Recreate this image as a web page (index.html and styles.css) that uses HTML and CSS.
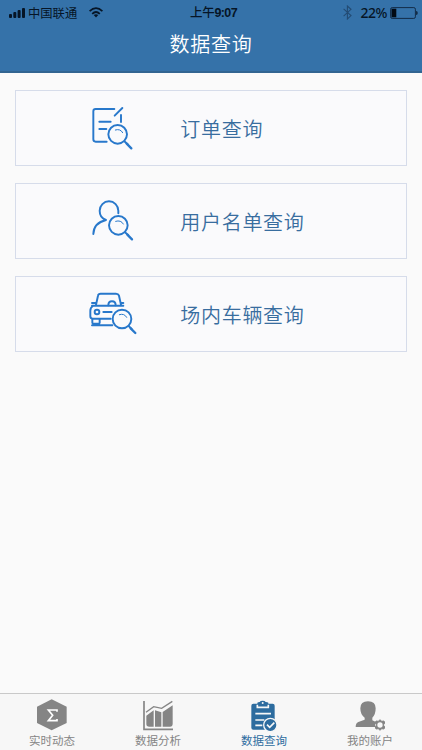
FILE: index.html
```html
<!DOCTYPE html>
<html lang="zh-CN">
<head>
<meta charset="utf-8">
<title>数据查询</title>
<link rel="stylesheet" href="styles.css">
</head>
<body>
<div class="app">
  <header class="header">
    <div class="status">
      <div class="status-left">
        <svg class="signal" width="17" height="11" viewBox="0 0 17 11"><g fill="#061526"><rect x="0" y="7" width="3" height="4" rx="1"/><rect x="4.3" y="5" width="3" height="6" rx="1"/><rect x="8.6" y="3" width="3" height="8" rx="1"/><rect x="13" y="1" width="3" height="10" rx="1"/></g></svg>
        <span class="carrier">中国联通</span>
        <svg class="wifi" width="14" height="11" viewBox="0 0 14 11"><g fill="none" stroke="#061526" stroke-width="1.7"><path d="M.6 4.2Q7-1.8 13.4 4.2"/><path d="M3.2 6.8Q7 3.2 10.8 6.8"/></g><path d="M4.7 8.1Q7 6.3 9.3 8.1L7 10.6z" fill="#061526"/></svg>
      </div>
      <div class="time">上午<span class="clock">9:07</span></div>
      <div class="status-right">
        <svg class="bluetooth" width="9" height="15" viewBox="0 0 9 15"><path d="M.6 3.8L8 10.6 4.4 14V1L8 4.3.6 11.2" fill="none" stroke="#234b73" stroke-width="1.1"/></svg>
        <span class="percent">22%</span>
        <svg class="battery" width="28" height="12" viewBox="0 0 28 12"><rect x=".6" y=".6" width="24.8" height="10.8" rx="1.6" fill="none" stroke="#122c48" stroke-width="1"/><rect x="1.5" y="1.7" width="4.8" height="8.6" fill="#020a14"/><path d="M26 4q1.8 0 1.8 2T26 8z" fill="#122c48"/></svg>
      </div>
    </div>
    <h1 class="title">数据查询</h1>
  </header>

  <main class="list">
    <a class="card">
      <svg class="card-icon" viewBox="20 68 160 150">
        <g class="line"><path d="M102 86H46q-7 0-7 7V177q0 7 7 7H79"/><path d="M57 124H91M57 146H78M103 106L126 83M122 104V125"/><circle cx="112" cy="162" r="28"/><path d="M105 149q15-5 22 8" stroke-width="3"/><path d="M132 183L142 192"/><path d="M139 190L153 204" stroke-width="7"/></g>
      </svg>
      <span class="card-label">订单查询</span>
    </a>
    <a class="card">
      <svg class="card-icon" viewBox="20 47 160 150">
        <g class="line"><path d="M39 161q1-33 38-42Q58 112 58 91a28 28 0 0 1 56 0v8"/><circle cx="114" cy="135" r="28"/><path d="M106 123q16-5 23 8" stroke-width="3"/><path d="M134 156L144 165"/><path d="M141 163L155 177" stroke-width="7"/></g>
      </svg>
      <span class="card-label">用户名单查询</span>
    </a>
    <a class="card">
      <svg class="card-icon" viewBox="20 41 160 150">
        <g class="line"><path d="M47 88L53 61q1-6 8-6H107q7 0 9 6L122 88M35 83H47M123 83H129M35 91H129M38 92q-8 4-8 14v17q0 7 7 7H91"/><path d="M84 90q0-12 11-12t11 12"/><circle cx="50" cy="110" r="7"/><path d="M69 110H94M36 131V142q0 3 4 3H54q4 0 4-3V131M35 150H96"/><circle cx="125" cy="131" r="28"/><path d="M117 118q15-5 22 8" stroke-width="3"/><path d="M145 152L154 161"/><path d="M151 159L165 173" stroke-width="7"/></g>
      </svg>
      <span class="card-label">场内车辆查询</span>
    </a>
  </main>

  <nav class="tabs">
    <a class="tab">
      <svg class="tab-icon" viewBox="105 38 102 102"><path d="M155 42L200 64V113L155 135 111 113V64z" fill="#858585"/><path d="M171 79V74H145L158 90 145 106H171V101" fill="none" stroke="#fff" stroke-width="5"/></svg>
      <span class="tab-label">实时动态</span>
    </a>
    <a class="tab">
      <svg class="tab-icon" viewBox="423 38 102 102"><g fill="#858585"><path d="M439 91L461 75V124H448q-9 0-9-8zM465 75L484 81V124H465zM488 80L518 60V115q0 9-8 9H488z"/><path d="M432 47V132H519" fill="none" stroke="#858585" stroke-width="5"/><path d="M438 81L461 64 485 69 517 48" fill="none" stroke="#858585" stroke-width="4"/></g></svg>
      <span class="tab-label">数据分析</span>
    </a>
    <a class="tab active">
      <svg class="tab-icon" viewBox="108 38 102 102"><path d="M127 55H139V52q2-2 7-2 2-4 9-4t9 4q6 0 8 2v3H185q6 0 6 6V133H127q-6 0-6-6V61q0-6 6-6z" fill="#2d6c9f"/><circle cx="155" cy="53" r="3" fill="#f7f7f7"/><path d="M139 58V66H172V58M133 85H180M133 104H160M133 120H154" fill="none" stroke="#f7f7f7" stroke-width="5"/><circle cx="178" cy="119" r="20" fill="#2d6c9f" stroke="#f7f7f7" stroke-width="4"/><path d="M168 118L176 126 190 112" fill="none" stroke="#f7f7f7" stroke-width="5"/></svg>
      <span class="tab-label">数据查询</span>
    </a>
    <a class="tab">
      <svg class="tab-icon" viewBox="427 38 102 102"><path d="M472 48q23 0 23 21 0 19-10 28v8l11 5q-5 7-2 15H435q0-12 8-15l19-7V97q-13-9-13-28 0-21 23-21z" fill="#858585"/><path d="M508 103L513 108 520 107 522 113 518 119 522 125 520 131 513 130 508 135 503 130 496 131 494 125 498 119 494 113 496 107 503 108z" fill="#858585" stroke="#858585" stroke-width="3"/><circle cx="508" cy="119" r="8" fill="#f7f7f7"/></svg>
      <span class="tab-label">我的账户</span>
    </a>
  </nav>
</div>
</body>
</html>
```

FILE: styles.css
```css
* {
  box-sizing: border-box;
}

body {
  margin: 0;
  font-family: "Noto Sans CJK SC", sans-serif;
  background: #fafafa;
}

.app {
  display: flex;
  flex-direction: column;
  height: 750px;
  overflow: hidden;
}

.header {
  flex: none;
  height: 73px;
  background: #3572a9;
  border-bottom: 2px solid #326591;
}

.status {
  display: grid;
  grid-template-columns: 1fr auto 1fr;
  align-items: center;
  height: 24px;
  padding: 0 4px 0 9px;
  color: #061526;
  font-size: 12.3px;
  line-height: 24px;
}

.status-left,
.status-right {
  display: flex;
  align-items: center;
}

.status-right {
  justify-content: flex-end;
}

.carrier {
  margin-left: 2px;
}

.wifi {
  margin-left: 12px;
}

.time {
  padding-right: 5px;
  font-size: 12.5px;
  font-weight: 500;
  letter-spacing: -0.3px;
  margin-right: -5px;
}

.clock {
  font-family: "Liberation Sans", sans-serif;
  font-size: 12.5px;
  font-weight: 700;
  letter-spacing: -0.6px;
}

.percent {
  margin: 0 3px 0 9px;
  font-family: "Noto Sans", sans-serif;
  font-size: 14px;
  font-weight: 500;
  letter-spacing: -0.5px;
}

.title {
  margin: 5px 0 0;
  color: #fff;
  font-size: 20px;
  font-weight: 350;
  line-height: 30px;
  letter-spacing: 0.7px;
  text-align: center;
}

.list {
  display: flex;
  flex: 1;
  flex-direction: column;
  gap: 17px;
  padding: 17px 15px 0;
}

.card {
  display: flex;
  align-items: center;
  height: 76px;
  padding-left: 70.6px;
  background: #fafafc;
  border: 1px solid #d6dcea;
}

.card-icon {
  width: 53.33px;
  height: 50px;
}

.line {
  fill: none;
  stroke: #2878cb;
  stroke-width: 5.8;
  stroke-linecap: round;
  stroke-linejoin: round;
}

.card-label {
  margin: 2px 0 0 40.4px;
  color: #386d9f;
  font-size: 20px;
  font-weight: 350;
  line-height: 30px;
  letter-spacing: 0.7px;
}

.tabs {
  display: grid;
  flex: none;
  grid-template-columns: repeat(4, 106px);
  height: 57px;
  padding-top: 4px;
  background: #f7f7f7;
  border-top: 1px solid #c9c9c9;
}

.tab {
  display: flex;
  flex-direction: column;
  align-items: center;
  padding-right: 2px;
  color: #858585;
}

.tab-icon {
  width: 34px;
  height: 34px;
}

.tab-label {
  font-size: 11.5px;
  line-height: 16px;
  white-space: nowrap;
}

.active {
  color: #2d6c9f;
}
```
